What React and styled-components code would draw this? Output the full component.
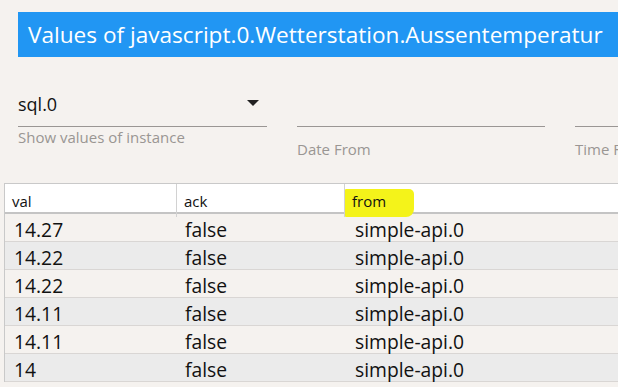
import React from 'react'
import styled, { createGlobalStyle } from 'styled-components'

const GlobalStyle = createGlobalStyle`
    body {
        margin: 0;
        background: #f5f2ef;
        font-family: "Open Sans", "Noto Sans", sans-serif;
        overflow: hidden;
    }
`

const Page = styled.div`
    width: 618px;
    height: 387px;
    overflow: hidden;
    padding-top: 12px;
    box-sizing: border-box;
`

const Title = styled.div`
    margin-left: 18px;
    height: 45px;
    background: #2196f3;
    color: #fff;
    font-size: 22.6px;
    display: flex;
    align-items: center;
    padding-left: 10px;
    white-space: nowrap;
    overflow: hidden;
`

const Controls = styled.div`
    display: flex;
    gap: 30px;
    padding-left: 18px;
    margin-top: 26px;
    height: 100px;
    white-space: nowrap;
    overflow: hidden;
`

const Field = styled.div`
    width: ${(p) => p.width || 248}px;
    flex-shrink: 0;
    display: flex;
    flex-direction: column;
`

const Input = styled.div`
    height: 44px;
    box-sizing: border-box;
    border-bottom: 1px solid #9a9694;
    display: flex;
    align-items: center;
    justify-content: space-between;
    font-size: 18px;
    color: #111;
    padding-right: 8px;
    padding-bottom: 2px;
`

const Helper = styled.div`
    font-size: 15px;
    color: #9a9693;
    margin-top: ${(p) => p.offset || 0}px;
`

const Arrow = styled.span`
    width: 0;
    height: 0;
    border-left: 6px solid transparent;
    border-right: 6px solid transparent;
    border-top: 6px solid #222;
    margin-bottom: 2px;
`

const Table = styled.div`
    margin-left: 4px;
    width: 640px;
    border-top: 1px solid #c9c9c9;
    border-left: 1px solid #c9c9c9;
`

const HeadRow = styled.div`
    display: grid;
    grid-template-columns: 171px 168px 1fr;
    background: #fff;
    height: 28px;
    border-bottom: 2px solid #c4c4c4;
`

const HeadCell = styled.div`
    font-size: 15px;
    color: #111;
    display: flex;
    align-items: center;
    padding-left: 7px;
    border-left: ${(p) => (p.first ? 'none' : '1px solid #d2d2d2')};
`

const Mark = styled.span`
    background: #f4f31a;
    padding: 2px 28px 6px 7px;
    margin-left: -7px;
    margin-top: 5px;
    border-radius: 1px 5px 8px 1px;
`

const Row = styled.div`
    display: grid;
    grid-template-columns: 172px 168px 1fr;
    height: 27px;
    border-bottom: 1px solid #d9d6d4;
    background: ${(p) => (p.alt ? '#ebebeb' : 'transparent')};
`

const Cell = styled.div`
    font-size: 19.3px;
    color: #111;
    display: flex;
    align-items: center;
    padding-top: 2px;
    padding-left: ${(p) => p.pad || 9}px;
`

const rows = ['14.27', '14.22', '14.22', '14.11', '14.11', '14']

export default function App() {
    return (
        <Page>
            <GlobalStyle />
            <Title>Values of javascript.0.Wetterstation.Aussentemperatur</Title>
            <Controls>
                <Field width={249}>
                    <Input>
                        <span>sql.0</span>
                        <Arrow />
                    </Input>
                    <Helper>Show values of instance</Helper>
                </Field>
                <Field>
                    <Input />
                    <Helper offset={12}>Date From</Helper>
                </Field>
                <Field>
                    <Input />
                    <Helper offset={12}>Time From</Helper>
                </Field>
            </Controls>
            <Table>
                <HeadRow>
                    <HeadCell first>val</HeadCell>
                    <HeadCell>ack</HeadCell>
                    <HeadCell><Mark>from</Mark></HeadCell>
                </HeadRow>
                {rows.map((v, i) => (
                    <Row key={i} alt={i % 2 === 1}>
                        <Cell>{v}</Cell>
                        <Cell pad={8}>false</Cell>
                        <Cell pad={10}>simple-api.0</Cell>
                    </Row>
                ))}
            </Table>
        </Page>
    )
}
